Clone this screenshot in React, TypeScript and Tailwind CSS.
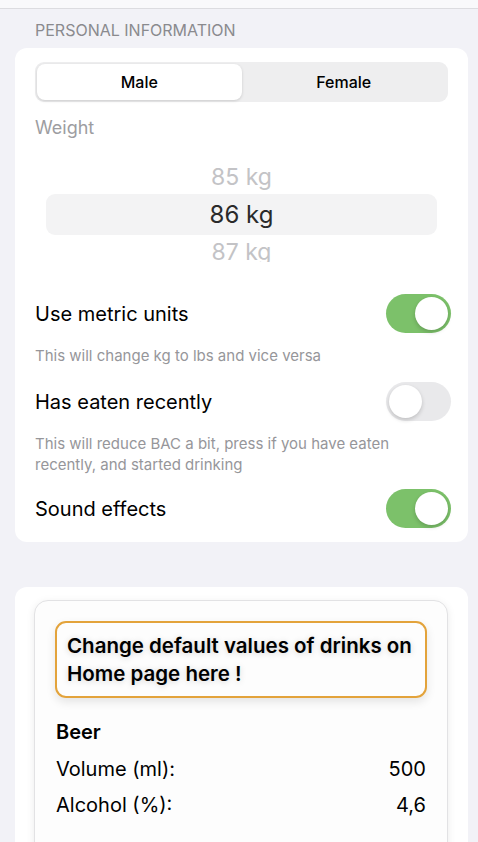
import { FC } from "react";

const Toggle: FC<{ on: boolean }> = ({ on }) => {
  return (
    <div
      className={`relative h-[39px] w-[65px] shrink-0 rounded-full ${
        on ? "bg-[#7cc16a]" : "bg-[#e9e9eb]"
      }`}
    >
      <div
        className={`absolute top-[3px] h-[33px] w-[33px] rounded-full bg-white shadow-[0_2px_4px_rgba(0,0,0,0.18)] ${
          on ? "left-[29px]" : "left-[3px]"
        }`}
      />
    </div>
  );
};

const SettingRow: FC<{ label: string; on: boolean; className?: string }> = ({ label, on, className }) => {
  return (
    <div className={`-mr-[3px] flex h-[39px] items-center justify-between ${className ?? ""}`}>
      <span className="text-[20px] text-black">{label}</span>
      <Toggle on={on} />
    </div>
  );
};

const App: FC = () => {
  return (
    <div
      className="h-[842px] w-[478px] overflow-hidden bg-[#f2f2f7]"
      style={{ fontFamily: "Inter, 'Noto Sans', sans-serif" }}
    >
      <div className="h-[9px] border-b border-[#dcdce0] bg-[#f9f9fb]" />

      <div className="px-[35px] pt-[12px] text-[16px] leading-[18px] text-[#8a8a8e]">
        PERSONAL INFORMATION
      </div>

      <div className="ml-[15px] mr-[10px] mt-[9px] rounded-[12px] bg-white px-[20px] pt-[14px] pb-[14px]">
        {/* gender segmented control */}
        <div className="flex h-[40px] rounded-[9px] bg-[#eeeeef] p-[2px]">
          <div className="flex flex-1 items-center justify-center rounded-[8px] bg-white text-[16px] font-medium text-black shadow-[0_1px_3px_rgba(0,0,0,0.15)]">
            Male
          </div>
          <div className="flex flex-1 items-center justify-center text-[16px] font-medium text-black">
            Female
          </div>
        </div>

        <div className="mt-[15px] text-[18px] leading-[22px] text-[#9d9da1]">Weight</div>

        {/* weight picker */}
        <div className="mt-[21px] flex h-[102px] flex-col overflow-hidden">
          <div className="flex h-[34px] shrink-0 items-center justify-center text-[23px] text-[#c3c3c6]">
            85 kg
          </div>
          <div className="mx-[11px] flex h-[41px] shrink-0 items-center justify-center rounded-[9px] bg-[#f3f3f4] text-[24px] text-[#2a2a2a]">
            86 kg
          </div>
          <div className="flex h-[34px] shrink-0 items-center justify-center text-[23px] text-[#c3c3c6]">
            87 kg
          </div>
        </div>

        <SettingRow label="Use metric units" on={true} className="mt-[32px]" />
        <p className="mt-[13px] text-[15px] leading-[20px] text-[#96969a]">
          This will change kg to lbs and vice versa
        </p>

        <SettingRow label="Has eaten recently" on={false} className="mt-[16px]" />
        <p className="mt-[12px] text-[15px] leading-[21px] text-[#96969a]">
          This will reduce BAC a bit, press if you have eaten recently, and started drinking
        </p>

        <SettingRow label="Sound effects" on={true} className="mt-[14px]" />
      </div>

      <div className="ml-[15px] mr-[10px] mt-[45px] rounded-[12px] bg-white pl-[19px] pr-[20px] pt-[13px]">
        <div className="h-[300px] rounded-[14px] border border-[#e2e2e4] bg-[#fdfdfd] px-[20px] pt-[20px] shadow-[0_2px_8px_rgba(0,0,0,0.08)]">
          <div className="rounded-[11px] border-2 border-[#e3a33b] px-[10px] pt-[9px] pb-[8px] shadow-[0_4px_10px_rgba(0,0,0,0.1)]">
            <p className="text-[20.5px] font-semibold leading-[28px] text-black [text-shadow:0_1px_6px_rgba(0,0,0,0.18)]">
              Change default values of drinks on Home page here !
            </p>
          </div>

          <div className="mt-[22px] px-[1px] text-[20px] leading-[24px] text-black">
            <div className="font-semibold">Beer</div>
            <div className="mt-[13px] flex justify-between">
              <span>Volume (ml):</span>
              <span>500</span>
            </div>
            <div className="mt-[12px] flex justify-between">
              <span>Alcohol (%):</span>
              <span>4,6</span>
            </div>
          </div>
        </div>
      </div>
    </div>
  );
};

export default App;
